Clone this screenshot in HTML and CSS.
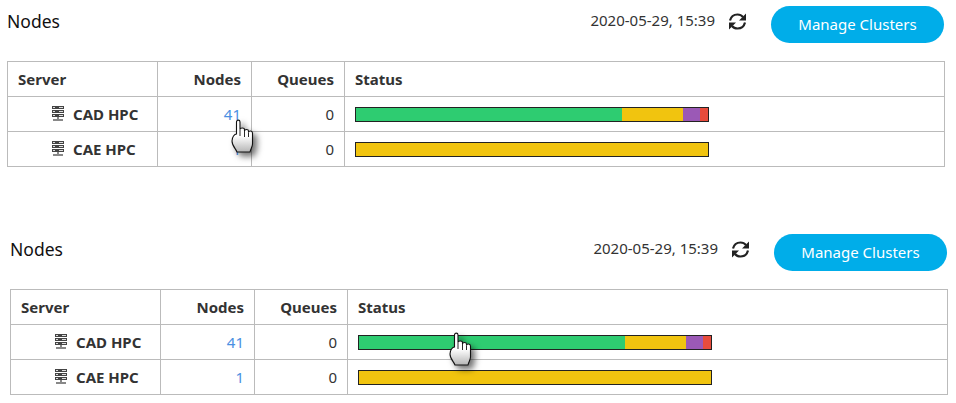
FILE: index.html
```html
<!DOCTYPE html>
<html lang="en">
<head>
  <meta charset="UTF-8" />
  <title>Nodes</title>
  <link rel="stylesheet" href="styles.css">
</head>
<body>

<svg class="defs" width="0" height="0">
  <symbol id="server" viewBox="0 0 12 15">
    <path fill="#444" d="M0 0h12v3H0zM0 4h12v3H0zM0 8h12v3H0z"/>
    <path fill="#ddd" d="M1 1h2v1H1zM1 5h2v1H1zM1 9h2v1H1zM7 1h4v1H7zM7 5h4v1H7zM7 9h4v1H7z"/>
    <path fill="#888" d="M5 11h2v2H5zM1 13h10v2H1z"/>
  </symbol>
  <symbol id="refresh" viewBox="0 0 19 19">
    <path fill="none" stroke="#222" stroke-width="2.200" d="M2 8.500C3 4.500 6 2.500 9.500 2.500C11.800 2.500 13.800 3.500 15 5M17 10.500C16 14.500 13 16.500 9.500 16.500C7.200 16.500 5.200 15.500 4 14"/>
    <path fill="#222" d="M18 1.500V8.500H11ZM1 17.500V10.500H8Z"/>
  </symbol>
  <linearGradient id="palm" x1="0" y1="0" x2="0" y2="1">
    <stop offset="0.5" stop-color="#fff"/>
    <stop offset="1" stop-color="#b5b5b5"/>
  </linearGradient>
  <symbol id="hand" viewBox="0 0 24 34">
    <path fill="url(#palm)" stroke="#111" stroke-width="1.1" d="M6.500 3C6.500 .5 10 .5 10 3V10.500C10 8.500 14.500 8.500 14.500 10.500V12C14.500 10 18.500 10 18.500 12V13.500C18.500 11.500 22.500 11.500 22.500 14V25C22.500 28 20.500 30 20 33H7C6 30 2 27 2 22C2 18 4.500 15 6.500 15Z"/>
    <path fill="none" stroke="#111" stroke-width=".9" d="M10 10.500V17M14.500 12V18M18.500 13.500V18"/>
  </symbol>
</svg>

<section class="panel">
  <header class="panel-head">
    <h2 class="panel-title">Nodes</h2>
    <span class="updated">2020-05-29, 15:39</span>
    <svg class="refresh"><use href="#refresh"/></svg>
    <button class="manage" type="button">Manage Clusters</button>
  </header>
  <table class="nodes">
    <thead>
      <tr><th class="col-server">Server</th><th class="col-num">Nodes</th><th class="col-queues">Queues</th><th>Status</th></tr>
    </thead>
    <tbody>
      <tr>
        <td class="server"><svg class="server-icon"><use href="#server"/></svg>CAD HPC</td>
        <td class="num"><a href="#">41</a></td>
        <td class="num">0</td>
        <td><div class="bar"><span class="ok" style="width:266px"></span><span class="warn" style="width:61px"></span><span class="busy" style="width:17px"></span><span class="down" style="width:8px"></span></div></td>
      </tr>
      <tr>
        <td class="server"><svg class="server-icon"><use href="#server"/></svg>CAE HPC</td>
        <td class="num"><a href="#">1</a></td>
        <td class="num">0</td>
        <td><div class="bar"><span class="warn" style="width:352px"></span></div></td>
      </tr>
    </tbody>
  </table>
  <svg class="hand hand-nodes"><use href="#hand"/></svg>
</section>

<section class="panel">
  <header class="panel-head">
    <h2 class="panel-title">Nodes</h2>
    <span class="updated">2020-05-29, 15:39</span>
    <svg class="refresh"><use href="#refresh"/></svg>
    <button class="manage" type="button">Manage Clusters</button>
  </header>
  <table class="nodes">
    <thead>
      <tr><th class="col-server">Server</th><th class="col-num">Nodes</th><th class="col-queues">Queues</th><th>Status</th></tr>
    </thead>
    <tbody>
      <tr>
        <td class="server"><svg class="server-icon"><use href="#server"/></svg>CAD HPC</td>
        <td class="num"><a href="#">41</a></td>
        <td class="num">0</td>
        <td><div class="bar"><span class="ok" style="width:266px"></span><span class="warn" style="width:61px"></span><span class="busy" style="width:17px"></span><span class="down" style="width:8px"></span></div></td>
      </tr>
      <tr>
        <td class="server"><svg class="server-icon"><use href="#server"/></svg>CAE HPC</td>
        <td class="num"><a href="#">1</a></td>
        <td class="num">0</td>
        <td><div class="bar"><span class="warn" style="width:352px"></span></div></td>
      </tr>
    </tbody>
  </table>
  <svg class="hand hand-status"><use href="#hand"/></svg>
</section>

</body>
</html>
```

FILE: styles.css
```css
body {
  font-family: "Noto Sans", sans-serif;
  color: #333;
  background: white;
  margin: 0;
  padding: 6px 0 0 7px;
}
.defs {
  position: absolute;
}
.panel {
  position: relative;
  width: 938px;
}
.panel + .panel {
  margin: 67px 0 0 3px;
}
.panel-head {
  display: flex;
  align-items: flex-start;
  height: 55px;
  padding-right: 1px;
}
.panel-title {
  margin: 2px auto 0 0;
  font-size: 17.5px;
  font-weight: 400;
  line-height: 26px;
  color: #111;
}
.updated {
  margin-top: 4px;
  font-size: 15px;
  line-height: 20px;
}
.refresh {
  width: 19px;
  height: 19px;
  margin: 6px 24px 0 13px;
}
.manage {
  width: 173px;
  height: 37px;
  padding: 0 0 2px;
  border: none;
  border-radius: 19px;
  background: #00ade9;
  color: white;
  font-family: inherit;
  font-size: 15px;
}
.nodes {
  width: 938px;
  table-layout: fixed;
  border-collapse: collapse;
  font-size: 15px;
}
.nodes th, .nodes td {
  height: 34px;
  padding: 0 10px;
  border: 1px solid #bbb;
  text-align: left;
}
.nodes th {
  font-weight: 700;
}
.nodes .col-server {
  width: 129px;
}
.nodes .col-num {
  width: 73px;
  text-align: right;
}
.nodes .col-queues {
  width: 72px;
  text-align: right;
}
.nodes .num {
  text-align: right;
}
.nodes .server {
  padding-left: 44px;
  font-weight: 700;
  white-space: nowrap;
}
.server-icon {
  width: 12px;
  height: 15px;
  margin-right: 9px;
  vertical-align: -1px;
}
a {
  color: #4a90e2;
  text-decoration: none;
}
.bar {
  display: flex;
  width: 352px;
  height: 13px;
  border: 1px solid #222;
}
.bar span {
  display: block;
}
.ok { background: #2ecc71; }
.warn { background: #f1c40f; }
.busy { background: #9b59b6; }
.down { background: #e74c3c; }
.hand {
  position: absolute;
  width: 24px;
  height: 34px;
  filter: drop-shadow(4px 4px 3px rgba(0,0,0,0.55));
}
.hand-nodes {
  left: 223px;
  top: 113px;
}
.hand-status {
  left: 438px;
  top: 98px;
}
```
